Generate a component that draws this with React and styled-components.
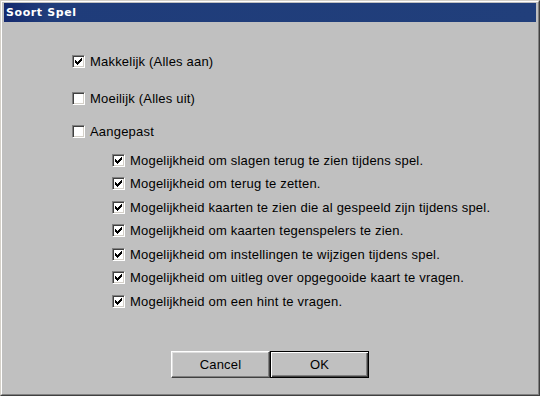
import React from 'react';
import styled, {createGlobalStyle} from 'styled-components';

const GlobalStyle = createGlobalStyle`
  html, body {
    margin: 0;
    padding: 0;
    background: #c0c0c0;
  }
`;

const Window = styled.div`
  box-sizing: border-box;
  width: 540px;
  height: 396px;
  display: flex;
  flex-direction: column;
  background: #c0c0c0;
  border: 1px solid;
  border-color: #d4d0c8 #404040 #404040 #d4d0c8;
  font-family: "Liberation Sans", Arial, sans-serif;
  font-size: 13px;
  letter-spacing: 0.2px;
  color: #000;
`;

const Frame = styled.div`
  flex: 1;
  display: flex;
  flex-direction: column;
  border: 1px solid;
  border-color: #ffffff #808080 #808080 #ffffff;
  padding: 1px 2px 2px 2px;
`;

const TitleBar = styled.div`
  height: 19px;
  display: flex;
  align-items: center;
  padding-left: 2px;
  background: linear-gradient(90deg, #14296e 0%, #1f3c7a 8%, #213f7b 100%);
  color: #fff;
  font-family: "DejaVu Sans", Tahoma, sans-serif;
  font-weight: bold;
  font-size: 11px;
  letter-spacing: 0.6px;
`;

const Body = styled.div`
  flex: 1;
  display: flex;
  flex-direction: column;
  padding: 31px 0 0 68px;
`;

const Options = styled.div`
  display: flex;
  flex-direction: column;
`;

const SubOptions = styled.div`
  display: flex;
  flex-direction: column;
  gap: 7.5px;
  margin-top: 13px;
  padding-left: 40px;
`;

const Row = styled.label`
  display: flex;
  align-items: center;
  height: 16px;
  margin-top: ${props => props.$gap || 0}px;
  white-space: nowrap;
`;

const Box = styled.span`
  box-sizing: border-box;
  width: 13px;
  height: 13px;
  flex: none;
  margin-right: 5px;
  background: #fff;
  border: 1px solid;
  border-color: #808080 #ffffff #ffffff #808080;
  box-shadow: inset 1px 1px 0 #404040, inset -1px -1px 0 #d4d0c8;
  position: relative;

  svg {
    position: absolute;
    left: -1px;
    top: -1px;
  }
`;

const Buttons = styled.div`
  display: flex;
  justify-content: center;
  margin-top: auto;
  margin-bottom: 14px;
  padding-right: 68px;
`;

const Button = styled.button`
  box-sizing: border-box;
  width: 99px;
  height: 27px;
  padding: 0;
  background: #c0c0c0;
  font-family: "Liberation Sans", Arial, sans-serif;
  font-size: 13px;
  letter-spacing: 0.2px;
  color: #000;
  border: 1px solid;
  border-color: ${props => props.$default ? '#000' : '#ffffff #404040 #404040 #ffffff'};
  box-shadow: ${props => props.$default
        ? 'inset 1px 1px 0 #ffffff, inset -1px -1px 0 #404040, inset -2px -2px 0 #808080'
        : 'inset -1px -1px 0 #808080, inset 1px 1px 0 #dfdfdf'};
  outline: none;
`;

const Check = () => (
    <svg width="13" height="13" viewBox="0 0 13 13" shapeRendering="crispEdges">
        <g fill="#000">
            <rect x="3" y="5" width="1" height="3"/>
            <rect x="4" y="6" width="1" height="3"/>
            <rect x="5" y="7" width="1" height="3"/>
            <rect x="6" y="6" width="1" height="3"/>
            <rect x="7" y="5" width="1" height="3"/>
            <rect x="8" y="4" width="1" height="3"/>
            <rect x="9" y="3" width="1" height="3"/>
        </g>
    </svg>
);

const CheckRow = ({label, checked, gap}) => (
    <Row $gap={gap}>
        <Box>{checked && <Check/>}</Box>
        {label}
    </Row>
);

const subItems = [
    'Mogelijkheid om slagen terug te zien tijdens spel.',
    'Mogelijkheid om terug te zetten.',
    'Mogelijkheid kaarten te zien die al gespeeld zijn tijdens spel.',
    'Mogelijkheid om kaarten tegenspelers te zien.',
    'Mogelijkheid om instellingen te wijzigen tijdens spel.',
    'Mogelijkheid om uitleg over opgegooide kaart te vragen.',
    'Mogelijkheid om een hint te vragen.',
];

const App = () => (
    <>
        <GlobalStyle/>
        <Window>
            <Frame>
                <TitleBar>Soort Spel</TitleBar>
                <Body>
                    <Options>
                        <CheckRow label="Makkelijk (Alles aan)" checked/>
                        <CheckRow label="Moeilijk (Alles uit)" gap={21}/>
                        <CheckRow label="Aangepast" gap={17}/>
                    </Options>
                    <SubOptions>
                        {subItems.map((item, index) => <CheckRow key={index} label={item} checked/>)}
                    </SubOptions>
                    <Buttons>
                        <Button>Cancel</Button>
                        <Button $default>OK</Button>
                    </Buttons>
                </Body>
            </Frame>
        </Window>
    </>
);

export default App;
